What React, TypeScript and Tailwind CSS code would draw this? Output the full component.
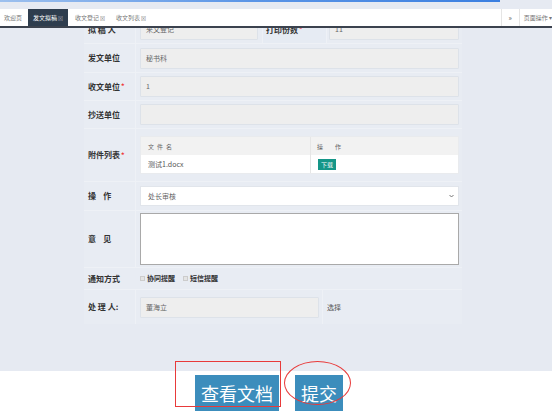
import type { ReactNode } from "react";

const font = "font-['Noto_Sans_CJK_SC','Liberation_Sans',sans-serif]";

function Label({ children, required }: { children: ReactNode; required?: boolean }) {
  return (
    <div className="flex w-[52px] shrink-0 items-center border-r border-[#eef1f6] pl-[4px] text-[8px] font-bold text-[#333]">
      <span className="whitespace-pre">{children}</span>
      {required ? <span className="ml-[1px] text-[7px] text-[#e33]">*</span> : null}
    </div>
  );
}

function Field({ value }: { value?: string }) {
  return (
    <div className="flex h-[21px] items-center rounded-[1px] border border-[#dde2e9] bg-[#eeeeee] pl-[5px] text-[7px] text-[#666]">
      {value}
    </div>
  );
}

function Row({
  label,
  required,
  className,
  children,
}: {
  label: ReactNode;
  required?: boolean;
  className: string;
  children: ReactNode;
}) {
  return (
    <div className={`flex border-b border-[#eef1f6] ${className}`}>
      <Label required={required}>{label}</Label>
      <div className="flex min-w-0 flex-1 flex-col justify-center pl-[4px] pr-[3px]">{children}</div>
    </div>
  );
}

export default function App() {
  return (
    <div className={`relative flex h-[411px] w-[552px] flex-col overflow-hidden bg-white ${font}`}>
      {/* top strip */}
      <div className="h-[9px] shrink-0 bg-[#e6eaf2]">
        <div className="h-[2px] w-[500px] bg-gradient-to-r from-[#9dc0ee] via-[#5b95e6] to-[#3b7fe0]" />
      </div>

      {/* tabs */}
      <div className="relative z-10 flex h-[19px] shrink-0 items-stretch border-b-2 border-[#3b424e] bg-white text-[6px] text-[#777]">
        <div className="flex items-center pl-[4px] pr-[6px]">欢迎页</div>
        <div className="flex items-center bg-[#2e3d4e] px-[5px] text-white">
          发文拟稿<span className="ml-[1px] text-[5px] text-[#aab]">⊠</span>
        </div>
        <div className="flex items-center pl-[7px] pr-[4px]">
          收文登记<span className="ml-[1px] text-[5px]">⊠</span>
        </div>
        <div className="flex items-center pl-[7px]">
          收文列表<span className="ml-[1px] text-[5px]">⊠</span>
        </div>
        <div className="flex-1" />
        <div className="flex w-[18px] items-center justify-center border-l border-[#e5e5e5] text-[7px] text-[#555]">»</div>
        <div className="flex items-center whitespace-nowrap border-l border-[#e5e5e5] pl-[4px]">页面操作 ▾</div>
      </div>

      {/* content */}
      <div className="h-[343px] shrink-0 overflow-hidden bg-[#e6eaf2]">
        <div className="ml-[84px] mt-[-12px] w-[378px] bg-[#e8ecf3]">
          {/* row 1 */}
          <div className="flex h-[28px] border-b border-[#eef1f6]">
            <Label>拟 稿 人</Label>
            <div className="flex w-[126px] flex-col justify-center pl-[4px] pr-[4px]">
              <Field value="来文登记" />
            </div>
            <div className="flex w-[65px] items-center border-x border-[#eef1f6] bg-[#e6ebf3] pl-[3px] text-[8px] font-bold text-[#333]">
              打印份数<span className="ml-[1px] text-[7px] text-[#e33]">*</span>
            </div>
            <div className="flex flex-1 flex-col justify-center pl-[2px] pr-[3px]">
              <Field value="11" />
            </div>
          </div>
          <Row label="发文单位" className="h-[29px]">
            <Field value="秘书科" />
          </Row>
          <Row label="收文单位" required className="h-[28px]">
            <Field value="1" />
          </Row>
          <Row label="抄送单位" className="h-[28px]">
            <Field />
          </Row>
          <Row label="附件列表" required className="h-[53px]">
            <div className="flex flex-col border border-[#e9ebee] text-[6px] text-[#666]">
              <div className="flex h-[18px] bg-[#f2f2f2]">
                <div className="flex w-[170px] items-center border-r border-[#e6e6e6] pl-[7px] tracking-[3px]">文件名</div>
                <div className="flex flex-1 items-center pl-[6px]">
                  操<span className="ml-[12px]">作</span>
                </div>
              </div>
              <div className="flex h-[18px] bg-white">
                <div className="flex w-[170px] items-center border-r border-[#e6e6e6] pl-[7px] text-[7px] text-[#555]">测试1.docx</div>
                <div className="flex flex-1 items-center pl-[7px]">
                  <span className="bg-[#159688] px-[3px] py-[2px] text-[6px] leading-[7px] text-white">下载</span>
                </div>
              </div>
            </div>
          </Row>
          <Row label={"操    作"} className="h-[29px]">
            <div className="flex h-[20px] items-center justify-between border border-[#e1e5eb] bg-white pl-[7px] pr-[4px] text-[7px] text-[#666]">
              处长审核
              <svg width="5" height="4" viewBox="0 0 5 4">
                <path d="M0.5 1l2 2 2-2" fill="none" stroke="#666" strokeWidth="0.9" />
              </svg>
            </div>
          </Row>
          <Row label={"意    见"} className="h-[57px]">
            <div className="h-[52px] border border-[#a9a9a9] bg-white" />
          </Row>
          <div className="flex h-[22px] items-center border-b border-[#eef1f6]">
            <div className="w-[52px] shrink-0 pl-[4px] text-[8px] font-bold text-[#333]">通知方式</div>
            <div className="flex items-center gap-[8px] pl-[4px] text-[7px] font-bold text-[#333]">
              <span className="flex items-center gap-[2px]">
                <span className="inline-block h-[5px] w-[5px] border border-[#ccc] bg-[#e4e4e4]" />
                协同提醒
              </span>
              <span className="flex items-center gap-[2px]">
                <span className="inline-block h-[5px] w-[5px] border border-[#ccc] bg-[#e4e4e4]" />
                短信提醒
              </span>
            </div>
          </div>
          <div className="flex h-[34px]">
            <Label>处 理 人:</Label>
            <div className="flex w-[187px] flex-col justify-center border-r border-[#eef1f6] pl-[4px] pr-[3px]">
              <Field value="董海立" />
            </div>
            <div className="flex items-center pl-[4px] text-[7px] text-[#555]">选择</div>
          </div>
        </div>
      </div>

      {/* footer buttons */}
      <div className="flex flex-1 items-start gap-[16px] bg-white pl-[195px] pt-[4px]">
        <div className="flex h-[36px] w-[84px] items-center justify-center bg-[#3c8dbc] text-[18px] text-white">查看文档</div>
        <div className="flex h-[36px] w-[48px] items-center justify-center bg-[#3c8dbc] text-[18px] text-white">提交</div>
      </div>

      {/* annotations */}
      <div className="absolute left-[175px] top-[361px] h-[46px] w-[106px] border border-[#e83a3a]" />
      <div className="absolute left-[284px] top-[361px] h-[44px] w-[67px] rounded-[50%] border border-[#e83a3a]" />
    </div>
  );
}
